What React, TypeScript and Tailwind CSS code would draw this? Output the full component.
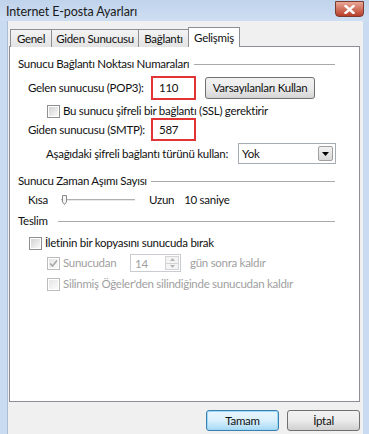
import React from "react";

const font = { fontFamily: "Lato, 'Noto Sans', sans-serif" };

function Checkbox({ checked = false, disabled = false }: { checked?: boolean; disabled?: boolean }) {
  return (
    <div
      className={`w-[13px] h-[13px] shrink-0 border ${disabled ? "border-[#bcbcbc]" : "border-[#8e8f8f]"} bg-white p-[1px] flex`}
    >
      <div
        className={`flex-1 flex items-center justify-center ${disabled ? "bg-gradient-to-br from-[#e6e6e6] to-[#fafafa]" : "bg-gradient-to-br from-[#d3d3d3] to-[#f9f9f9]"}`}
      >
        {checked && (
          <svg width="9" height="9" viewBox="0 0 9 9">
            <path d="M1 4.5 L3.5 7 L8 1.5" fill="none" stroke="#a8a8a8" strokeWidth="1.6" />
          </svg>
        )}
      </div>
    </div>
  );
}

function GroupHeader({ children, gap = "ml-[5px]" }: { children: React.ReactNode; gap?: string }) {
  return (
    <div className="flex items-center h-[16px] pl-[8px] pr-[24px]">
      <span className="whitespace-nowrap">{children}</span>
      <div className={`flex-1 h-px bg-[#a9a9a9] ${gap}`} />
    </div>
  );
}

const tabBase =
  "h-[18px] -ml-px border border-[#8c8e94] border-b-0 bg-gradient-to-b from-[#f3f3f3] to-[#e3e3e3] flex items-center justify-center leading-[16px] whitespace-nowrap shrink-0";

export default function App() {
  return (
    <div
      className="w-[369px] h-[434px] bg-[#c8dbf0] flex flex-col text-[11.5px] tracking-[-0.28px] text-[#111] overflow-hidden"
      style={font}
    >
      {/* Title bar */}
      <div className="h-[21px] flex items-start bg-gradient-to-b from-[#bfd3ec] to-[#cfdff2]">
        <div className="pl-[6px] pt-[3px] text-[12.5px] tracking-[-0.1px] leading-[17px] text-[#1a1a1a] flex-1 whitespace-nowrap">
          Internet E-posta Ayarları
        </div>
        <div className="mt-[1px] mr-[5px] w-[29px] h-[16px] rounded-b-[4px] border border-[#7a3b30] bg-gradient-to-b from-[#e9a797] via-[#d0725f] to-[#b83d28] flex items-center justify-center">
          <svg width="11" height="9" viewBox="0 0 11 9">
            <path d="M1.5 1 L9.5 8 M9.5 1 L1.5 8" stroke="#ffffff" strokeWidth="2.4" strokeLinecap="square" />
          </svg>
        </div>
      </div>

      {/* Body */}
      <div className="flex-1 ml-[7px] mr-[6px] bg-[#f0f0f0] flex flex-col border-l border-[#aebed1]">
        {/* Tabs */}
        <div className="mt-[6px] h-[20px] flex items-end pl-[3px] relative z-10 -mb-px">
          <div className={`w-[42px] ${tabBase}`}>Genel</div>
          <div className={`w-[88px] ${tabBase}`}>Giden Sunucusu</div>
          <div className={`w-[51px] ${tabBase}`}>Bağlantı</div>
          <div className="w-[52px] h-[20px] -ml-px border border-[#8c8e94] border-b-0 bg-white flex items-start justify-center pt-[2px] leading-[16px] relative z-10 whitespace-nowrap shrink-0">
            Gelişmiş
          </div>
        </div>

        {/* Panel */}
        <div className="ml-[1px] w-[351px] h-[356px] border border-[#8c8e94] bg-white flex flex-col">
          <div className="mt-[9px]">
            <GroupHeader>Sunucu Bağlantı Noktası Numaraları</GroupHeader>
          </div>

          {/* Gelen */}
          <div className="mt-[4px] h-[24px] flex items-center pl-[18px]">
            <div className="w-[123px] shrink-0 whitespace-nowrap">Gelen sunucusu (POP3):</div>
            <div className="w-[45px] h-[24px] shrink-0 border-2 border-[#e23434] bg-white flex items-center pl-[6px]">110</div>
            <div className="ml-[9px] w-[110px] h-[22px] shrink-0 rounded-[3px] border border-[#707070] bg-gradient-to-b from-[#f2f2f2] via-[#ebebeb] to-[#d5d5d5] flex items-center justify-center whitespace-nowrap">
              Varsayılanları Kullan
            </div>
          </div>

          {/* SSL */}
          <div className="mt-[4px] h-[14px] flex items-center pl-[37px]">
            <Checkbox />
            <span className="ml-[3px] whitespace-nowrap">Bu sunucu şifreli bir bağlantı (SSL) gerektirir</span>
          </div>

          {/* Giden */}
          <div className="h-[23px] flex items-center pl-[18px]">
            <div className="w-[123px] shrink-0 whitespace-nowrap">Giden sunucusu (SMTP):</div>
            <div className="w-[45px] h-[23px] shrink-0 border-2 border-[#e23434] bg-white flex items-center pl-[6px]">587</div>
          </div>

          {/* Şifreli */}
          <div className="mt-[2px] h-[21px] flex items-center pl-[36px]">
            <div className="w-[192px] shrink-0 whitespace-nowrap">Aşağıdaki şifreli bağlantı türünü kullan:</div>
            <div className="w-[98px] h-[21px] shrink-0 border border-[#a5acb5] bg-white flex items-center justify-between pl-[3px] pr-[2px]">
              <span>Yok</span>
              <div className="w-[15px] h-[15px] border border-[#a0a0a0] rounded-[2px] bg-gradient-to-b from-[#f2f2f2] to-[#d8d8d8] flex items-center justify-center">
                <svg width="7" height="4" viewBox="0 0 7 4">
                  <path d="M0 0 L7 0 L3.5 4 Z" fill="#000" />
                </svg>
              </div>
            </div>
          </div>

          <div className="mt-[9px]">
            <GroupHeader gap="ml-[4px]">Sunucu Zaman Aşımı Sayısı</GroupHeader>
          </div>

          {/* Slider */}
          <div className="mt-[3px] h-[16px] flex items-center pl-[18px]">
            <span className="w-[33px] shrink-0">Kısa</span>
            <div className="relative w-[74px] h-[12px] flex items-center shrink-0">
              <div className="w-full h-[2px] border-t border-[#b0b0b0] border-b border-b-[#e8e8e8] bg-[#e0e0e0]" />
              <svg className="absolute left-[1px] top-[1px]" width="5" height="10" viewBox="0 0 5 10">
                <path d="M0.5 0.5 H4.5 V7 L2.5 9.5 L0.5 7 Z" fill="#f4f4f4" stroke="#8a8a8a" strokeWidth="1" />
              </svg>
            </div>
            <span className="ml-[14px]">Uzun</span>
            <span className="ml-[10px]">10 saniye</span>
          </div>

          <div className="mt-[5px]">
            <GroupHeader gap="ml-[10px]">Teslim</GroupHeader>
          </div>

          {/* İletinin */}
          <div className="mt-[6px] h-[16px] flex items-center pl-[19px]">
            <Checkbox />
            <span className="ml-[3px] whitespace-nowrap">İletinin bir kopyasını sunucuda bırak</span>
          </div>

          {/* Sunucudan */}
          <div className="mt-[3px] h-[18px] flex items-center pl-[37px] text-[#a0a0a0]">
            <Checkbox checked disabled />
            <span className="ml-[3px] w-[67px] shrink-0 whitespace-nowrap">Sunucudan</span>
            <div className="w-[51px] h-[18px] shrink-0 border border-[#c9cdd2] bg-white flex items-center justify-between pl-[4px] pr-[1px]">
              <span className="pt-[2px]">14</span>
              <div className="w-[14px] h-[14px] flex flex-col">
                <div className="flex-1 border border-[#d4d4d4] bg-[#f4f4f4] flex items-center justify-center">
                  <svg width="5" height="3" viewBox="0 0 5 3"><path d="M0 3 L5 3 L2.5 0 Z" fill="#b5b5b5" /></svg>
                </div>
                <div className="flex-1 border border-t-0 border-[#d4d4d4] bg-[#f4f4f4] flex items-center justify-center">
                  <svg width="5" height="3" viewBox="0 0 5 3"><path d="M0 0 L5 0 L2.5 3 Z" fill="#b5b5b5" /></svg>
                </div>
              </div>
            </div>
            <span className="ml-[9px] whitespace-nowrap">gün sonra kaldır</span>
          </div>

          {/* Silinmiş */}
          <div className="mt-[4px] h-[16px] flex items-center pl-[37px] text-[#a0a0a0]">
            <Checkbox disabled />
            <span className="ml-[3px] whitespace-nowrap">Silinmiş Öğeler'den silindiğinde sunucudan kaldır</span>
          </div>
        </div>

        {/* Buttons */}
        <div className="mt-[8px] flex justify-end pr-[3px] gap-[8px]">
          <div className="w-[73px] h-[21px] rounded-[3px] border border-[#3c7fb1] bg-gradient-to-b from-[#eaf6fd] via-[#d9f0fc] to-[#a7d9f5] shadow-[inset_0_0_0_1px_#9ed8f7] flex items-center justify-center">
            Tamam
          </div>
          <div className="w-[73px] h-[21px] rounded-[3px] border border-[#707070] bg-gradient-to-b from-[#f2f2f2] via-[#ebebeb] to-[#d0d0d0] flex items-center justify-center">
            İptal
          </div>
        </div>
      </div>
    </div>
  );
}
